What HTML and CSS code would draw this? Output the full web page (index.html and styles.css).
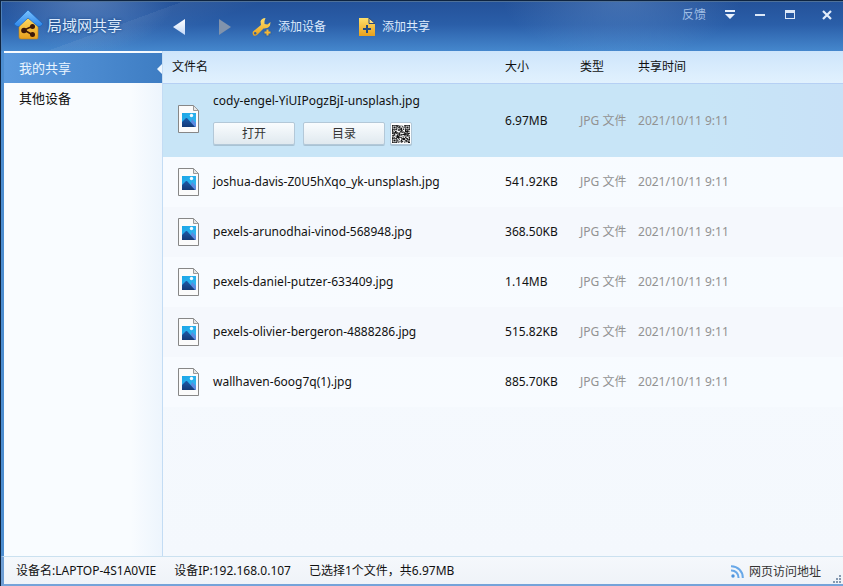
FILE: index.html
```html
<!DOCTYPE html>
<html lang="zh-CN">
<head>
<meta charset="utf-8">
<title>局域网共享</title>
<link rel="stylesheet" href="styles.css">
</head>
<body>
<svg class="defs" width="0" height="0" aria-hidden="true">
  <defs>
    <linearGradient id="gold" x1="0" y1="0" x2="0" y2="1"><stop offset="0" stop-color="#ffe06a"/><stop offset="1" stop-color="#e8a01c"/></linearGradient>
    <linearGradient id="roof" x1="0" y1="0" x2="0" y2="1"><stop offset="0" stop-color="#7cc4ff"/><stop offset="1" stop-color="#2c86ea"/></linearGradient>
    <linearGradient id="arrow" x1="0" y1="0" x2="0" y2="1"><stop offset="0" stop-color="#ffffff"/><stop offset="1" stop-color="#c3d9f8"/></linearGradient>
    <linearGradient id="sky" x1="0" y1="0" x2="1" y2="1"><stop offset="0" stop-color="#1ba6e6"/><stop offset="1" stop-color="#35b8f2"/></linearGradient>
    <linearGradient id="hill" x1="0" y1="0" x2="0" y2="1"><stop offset="0" stop-color="#1c59a8"/><stop offset="1" stop-color="#123a78"/></linearGradient>
    <symbol id="file" viewBox="0 0 21 28">
      <path d="M.5.5H15.5L20.5 5.500V27.500H.5Z" fill="#fbfbfb" stroke="#878787"/>
      <path d="M15.500.5V5.500H20.500Z" fill="#e6e6e6" stroke="#9a9a9a"/>
      <path d="M4 8H18V22H4Z" fill="url(#sky)"/>
      <path d="M11 22L14 14L18 18V22Z" fill="#5b8ae0"/>
      <path d="M4 17L8 13H9L17 22H4Z" fill="url(#hill)"/>
      <circle cx="13.500" cy="10.500" r="1.700" fill="#f2fbff"/>
    </symbol>
  </defs>
</svg>
<div class="window">
  <header class="titlebar">
    <div class="brand">
      <svg width="32" height="32" viewBox="0 0 32 32" aria-hidden="true">
        <path d="M6 14L15 6L25 14V28Q25 30 24 30H8Q6 30 6 28Z" fill="url(#gold)" stroke="#b9821c" stroke-width=".6"/>
        <path d="M15 1L30 15L27 17.500H25L15 9L6 17.500H4L1 15Z" fill="url(#roof)" stroke="#1762bb" stroke-width=".7"/>
        <path d="M20 17L11 21L20 26" fill="none" stroke="#3b1808" stroke-width="1.500"/>
        <circle cx="11" cy="21.500" r="2.800" fill="#3b1808"/><circle cx="19.500" cy="17.500" r="2.500" fill="#3b1808"/><circle cx="19.500" cy="25.500" r="2.500" fill="#3b1808"/>
      </svg>
      <h1>局域网共享</h1>
    </div>
    <nav class="history">
      <button type="button" aria-label="后退"><svg width="14" height="16" viewBox="0 0 14 16"><path d="M13 0V16L1 8Z" fill="url(#arrow)"/></svg></button>
      <button type="button" aria-label="前进"><svg width="14" height="16" viewBox="0 0 14 16"><path d="M1 0V16L13 8Z" fill="#8193ac"/></svg></button>
    </nav>
    <div class="tools">
      <button type="button">
        <svg width="20" height="20" viewBox="0 0 20 20" aria-hidden="true"><path d="M13.500 1Q9.500 1 8.500 4.500L9 8L1 14.500Q0 16.500 1.500 18.500Q3.500 19.500 5.500 17.500L11.500 11.500Q16 12 18 8.500L18.500 5L15.500 7.500L12.500 7V4Z" fill="url(#gold)"/><circle cx="3.200" cy="16.300" r="1.200" fill="#2e5f9f"/><path d="M14.500 12.500H16.500V14.500H18.500V16.500H16.500V18.500H14.500V16.500H12.500V14.500H14.500Z" fill="#f7b734" stroke="#2d65a8" stroke-width="2" paint-order="stroke"/></svg>
        <span>添加设备</span>
      </button>
      <button type="button">
        <svg width="18" height="20" viewBox="0 0 18 20" aria-hidden="true"><path d="M1 1H11L17 7V19H1Z" fill="url(#gold)"/><path d="M11 1V6.500H17Z" fill="#ffe184" stroke="#27477a"/><path d="M9 8V16M5 12H13" stroke="#244c82" stroke-width="2"/></svg>
        <span>添加共享</span>
      </button>
    </div>
    <div class="controls">
      <a class="feedback" href="#">反馈</a>
      <button type="button" aria-label="菜单"><svg width="12" height="12" viewBox="0 0 12 12"><path d="M1 1H11V3H1ZM1 5H11L6 10Z" fill="#e9f1fc"/></svg></button>
      <button type="button" aria-label="最小化"><svg width="12" height="12" viewBox="0 0 12 12"><path d="M1 5H11V7H1Z" fill="#dce8f8"/></svg></button>
      <button type="button" aria-label="最大化"><svg width="12" height="12" viewBox="0 0 12 12"><path d="M1 1H11V10H1ZM2 4V9H10V4Z" fill="#dce8f8" fill-rule="evenodd"/></svg></button>
      <button type="button" class="close" aria-label="关闭"><svg width="12" height="12" viewBox="0 0 12 12"><path d="M2 2L10 10M10 2L2 10" stroke="#e3edfb" stroke-width="2.200"/></svg></button>
    </div>
  </header>
  <div class="body">
    <nav class="sidebar">
      <a class="current" href="#">我的共享</a>
      <a href="#">其他设备</a>
    </nav>
    <main class="files">
      <table>
        <colgroup><col class="c-icon"><col class="c-name"><col class="c-size"><col class="c-type"><col class="c-time"></colgroup>
        <thead><tr><th colspan="2">文件名</th><th>大小</th><th>类型</th><th>共享时间</th></tr></thead>
        <tbody>
          <tr class="selected"><td><svg class="file" aria-hidden="true"><use href="#file"/></svg></td>
            <td><div>cody-engel-YiUIPogzBjI-unsplash.jpg</div>
              <div class="actions"><button type="button">打开</button><button type="button">目录</button><button type="button" class="qr" aria-label="二维码"><svg id="qr" width="18" height="18" viewBox="0 0 25 25" aria-hidden="true"></svg></button></div></td>
            <td>6.97MB</td><td>JPG 文件</td><td>2021/10/11 9:11</td></tr>
          <tr><td><svg class="file" aria-hidden="true"><use href="#file"/></svg></td><td>joshua-davis-Z0U5hXqo_yk-unsplash.jpg</td><td>541.92KB</td><td>JPG 文件</td><td>2021/10/11 9:11</td></tr>
          <tr><td><svg class="file" aria-hidden="true"><use href="#file"/></svg></td><td>pexels-arunodhai-vinod-568948.jpg</td><td>368.50KB</td><td>JPG 文件</td><td>2021/10/11 9:11</td></tr>
          <tr><td><svg class="file" aria-hidden="true"><use href="#file"/></svg></td><td>pexels-daniel-putzer-633409.jpg</td><td>1.14MB</td><td>JPG 文件</td><td>2021/10/11 9:11</td></tr>
          <tr><td><svg class="file" aria-hidden="true"><use href="#file"/></svg></td><td>pexels-olivier-bergeron-4888286.jpg</td><td>515.82KB</td><td>JPG 文件</td><td>2021/10/11 9:11</td></tr>
          <tr><td><svg class="file" aria-hidden="true"><use href="#file"/></svg></td><td>wallhaven-6oog7q(1).jpg</td><td>885.70KB</td><td>JPG 文件</td><td>2021/10/11 9:11</td></tr>
        </tbody>
      </table>
    </main>
  </div>
  <footer class="status">
    <span>设备名:LAPTOP-4S1A0VIE</span>
    <span>设备IP:192.168.0.107</span>
    <span>已选择1个文件，共6.97MB</span>
    <a class="web" href="#"><svg width="13" height="13" viewBox="0 0 13 13" aria-hidden="true"><circle cx="2" cy="11" r="1.700" fill="#4c93dc"/><path d="M0 5.500A7 7 0 0 1 7.500 13M0 1.200A11.500 11.500 0 0 1 11.800 13" fill="none" stroke="#68a8e8" stroke-width="2"/></svg>网页访问地址</a>
    <svg class="grip" width="9" height="9" viewBox="0 0 9 9" aria-hidden="true"><path d="M6 0H8V2H6ZM3 3H5V5H3ZM6 3H8V5H6ZM0 6H2V8H0ZM3 6H5V8H3ZM6 6H8V8H6Z" fill="#8599b0"/></svg>
  </footer>
</div>
<script src="qr.js"></script>
</body>
</html>
```
FILE: styles.css
```css
* { box-sizing: border-box; }
body {
  margin: 0;
  font: 12px/16px "Noto Sans", "Noto Sans CJK SC", sans-serif;
  color: #111;
}
.defs { position: absolute; }
button { border: 0; padding: 0; background: none; font: inherit; color: inherit; }
a { color: inherit; text-decoration: none; }
svg { display: block; flex: none; }
.window {
  display: flex;
  flex-direction: column;
  min-height: 100vh;
  border-top: 1px solid #0e2440;
  border-left: 1px solid #0e2440;
}
.titlebar {
  display: flex;
  align-items: flex-start;
  height: 50px;
  padding-left: 11px;
  border-top: 1px solid #4f7199;
  border-left: 1px solid #4f80b8;
  color: #dceafc;
  background:
    linear-gradient(160deg, transparent 40%, rgba(255, 255, 255, .06) 40%, transparent 62%) 30px 0 / 240px 100% no-repeat,
    radial-gradient(ellipse 90px 60px at 85px -10px, rgba(160, 190, 230, .4), transparent),
    radial-gradient(ellipse 120px 60px at 620px -5px, rgba(130, 170, 220, .35), transparent),
    linear-gradient(#24529a, #2a5ea8 45%, #4587cd);
}
.brand { display: flex; align-items: center; gap: 2px; padding-top: 7px; width: 159px; }
.brand h1 { margin: 0; font-size: 15px; line-height: 20px; font-weight: 400; text-shadow: 0 0 3px #0e3b78; }
.history { display: flex; gap: 32px; width: 80px; padding-top: 17px; }
.tools { display: flex; gap: 32px; padding-top: 14px; }
.tools button { display: flex; align-items: center; gap: 6px; height: 22px; }
.controls { display: flex; align-items: center; gap: 18px; margin-left: auto; padding-right: 10px; height: 25px; }
.controls .close { margin-left: 7px; }
.feedback { color: #9fbde4; }
.body { display: flex; flex: 1; border-left: 3px solid #4c8dd0; }
.sidebar { width: 159px; padding-top: 2px; background: linear-gradient(90deg, #f9fcff 80%, #edf5fd); border-right: 1px solid #c3dcf4; font-size: 13px; }
.sidebar a { display: block; position: relative; height: 30px; padding: 7px 15px; }
.sidebar .current { color: #e9f4ff; background: linear-gradient(90deg, #5b9ade, #3e7dc3); }
.current::after { content: ""; position: absolute; right: 0; top: 11px; border: 5px solid transparent; border-left-width: 0; border-right-color: #eef7ff; }
.files { flex: 1; background: linear-gradient(#f7fbff, #f4f8fd); }
table { width: 100%; table-layout: fixed; border-collapse: separate; border-spacing: 0; }
.c-icon { width: 50px; }
.c-name { width: 292px; }
.c-size { width: 75px; }
.c-type { width: 58px; }
th, td { padding: 0; text-align: left; font-weight: 400; }
thead tr { background: linear-gradient(#cee5fb, #e2f2fe); }
th { height: 33px; border-bottom: 1px solid #b6d0f4; box-shadow: 0 1px #f4faff; }
th:first-child { padding-left: 9px; }
tbody tr { height: 50px; background: linear-gradient(90deg, #f8fbff, #f7fbff); }
tbody tr:nth-child(odd) { background: #f5f8fd; }
tbody .selected.selected { height: 73px; background: linear-gradient(90deg, #c8e5f7 80%, #c8e1f7); }
td:nth-child(4), td:nth-child(5) { color: #929292; }
.file { width: 21px; height: 28px; margin-left: 15px; }
.selected td:nth-child(-n+2) { padding-bottom: 3px; }
.actions { display: flex; gap: 8px; padding-top: 13px; }
.actions button { width: 82px; height: 23px; border: 1px solid #b3c8d8; border-radius: 2px; background: linear-gradient(#f9fcfe, #e0e9ef); box-shadow: 0 1px #a9c3d4; color: #333; }
.actions .qr { width: 22px; padding: 1px; background: #fff; margin-left: -3px; }
.status { display: flex; align-items: center; gap: 18px; height: 30px; padding: 0 1px 0 12px; border-top: 1px solid #cbe1f0; border-left: 3px solid #6f9fd5; border-bottom: 2px solid #75a3d9; background: linear-gradient(#f5f8fc, #eff3f8); }
.web { display: flex; align-items: center; gap: 5px; margin: 2px -6px 0 auto; color: #333; }
.grip { align-self: flex-end; }
```
FILE: qr.js
```javascript
const svg = document.getElementById("qr");
const size = 25;
const corners = [[0, 0], [size - 7, 0], [0, size - 7]];
let seed = 7;
let d = "";
for (let y = 0; y < size; y++) {
  for (let x = 0; x < size; x++) {
    seed = (seed * 1103515245 + 12345) % 2147483648;
    let dark = seed / 2147483648 > 0.4;
    for (const [cx, cy] of corners) {
      const ring = Math.max(Math.abs(x - cx - 3), Math.abs(y - cy - 3));
      if (ring < 4) dark = ring !== 2;
    }
    if (dark) d += `M${x} ${y}h1v1h-1z`;
  }
}
svg.innerHTML = `<path d="${d}" fill="#111"/>`;
```
